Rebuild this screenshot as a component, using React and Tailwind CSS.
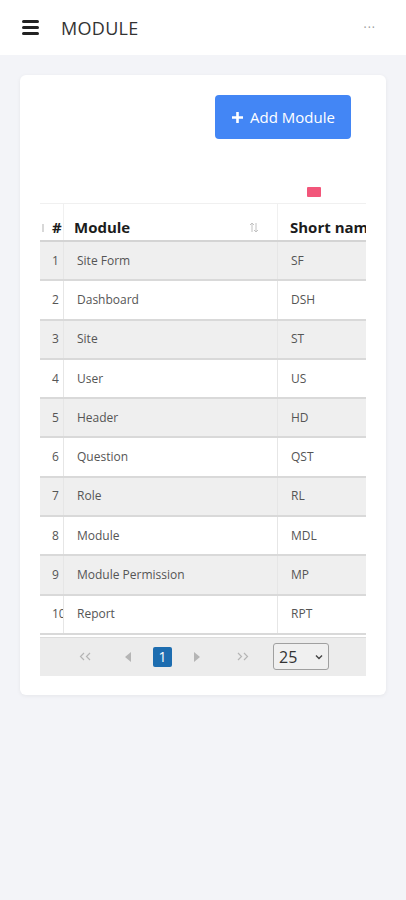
import React from 'react';

const rows = [
  { id: 1, name: 'Site Form', short: 'SF' },
  { id: 2, name: 'Dashboard', short: 'DSH' },
  { id: 3, name: 'Site', short: 'ST' },
  { id: 4, name: 'User', short: 'US' },
  { id: 5, name: 'Header', short: 'HD' },
  { id: 6, name: 'Question', short: 'QST' },
  { id: 7, name: 'Role', short: 'RL' },
  { id: 8, name: 'Module', short: 'MDL' },
  { id: 9, name: 'Module Permission', short: 'MP' },
  { id: 10, name: 'Report', short: 'RPT' },
];

const App = () => {
  return (
    <div className="min-h-screen bg-[#f3f4f8]" style={{ fontFamily: '"Open Sans", "Liberation Sans", sans-serif' }}>
      {/* Top bar */}
      <div className="h-[55px] bg-white flex items-center px-[22px]">
        <div className="flex flex-col gap-[3.5px] w-[17px]">
          <span className="block h-[2.5px] bg-[#222] rounded"></span>
          <span className="block h-[2.5px] bg-[#222] rounded"></span>
          <span className="block h-[2.5px] bg-[#222] rounded"></span>
        </div>
        <h1 className="ml-[22px] mt-[2px] text-[18px] text-[#333] tracking-[0.3px]">MODULE</h1>
        <span className="ml-auto mr-[8px] text-[#999] text-[12px] tracking-[1px] leading-none">···</span>
      </div>

      {/* Card */}
      <div className="mx-5 mt-5 bg-white rounded-md shadow-[0_1px_4px_rgba(0,0,0,0.06)] px-5 pt-5 pb-[19px]">
        <div className="flex justify-end mr-[15px]">
          <button className="h-[44px] w-[136px] bg-[#4386f5] rounded-sm text-white text-[15px] flex items-center justify-center gap-[6px]">
            <svg width="13" height="13" viewBox="0 0 13 13">
              <path d="M6.5 1v11M1 6.5h11" stroke="white" strokeWidth="2.6" />
            </svg>
            Add Module
          </button>
        </div>

        <div className="flex justify-end mt-12 mr-[45px]">
          <div className="w-[14px] h-[10px] bg-[#f2567a] rounded-[1px]"></div>
        </div>

        {/* Table */}
        <div className="mt-[6px] overflow-hidden">
          <div className="w-[420px]">
            <div className="flex h-[39px] border-t border-[#f0f0f0] border-b-2 border-b-[#d4d4d4] text-[15px] font-bold text-[#1c1c1c]">
              <div className="w-[24px] h-full flex items-center pt-[10px] border-r border-[#f0f0f0] relative">
                <span className="absolute left-[2px] top-[20px] w-[2px] h-[8px] bg-[#d8d8d8]"></span>
                <span className="ml-[12px]">#</span>
              </div>
              <div className="w-[214px] h-full flex items-center pt-[10px] justify-between pl-[10px] pr-[18px] border-r border-[#f0f0f0]">
                <span>Module</span>
                <svg width="10" height="11" viewBox="0 0 10 11">
                  <path d="M3 10V1M1 3l2-2 2 2M7 1v9M5 8l2 2 2-2" stroke="#c2c2c2" strokeWidth="1" fill="none" />
                </svg>
              </div>
              <div className="h-full flex items-center pt-[10px] pl-[12px] whitespace-nowrap">Short name</div>
            </div>

            {rows.map((r, i) => (
              <div
                key={r.id}
                className={`flex h-[39.3px] items-center border-b-2 border-[#d9d9d9] text-[12px] text-[#555] ${i % 2 === 0 ? 'bg-[#efefef]' : 'bg-white'}`}
              >
                <div className="w-[24px] h-full flex items-center overflow-hidden whitespace-nowrap border-r border-[#e6e6e6]">
                  <span className="ml-[12px]">{r.id}</span>
                </div>
                <div className="w-[214px] h-full flex items-center pl-[13px] border-r border-[#e6e6e6]">{r.name}</div>
                <div className="pl-[13px]">{r.short}</div>
              </div>
            ))}

            {/* Pagination */}
            <div className="mt-[2px] h-[39px] bg-[#ececec] border-t border-[#dcdcdc] flex items-center">
              <span className="ml-[35px] w-[20px] flex justify-center">
                <svg width="13" height="9" viewBox="0 0 13 9">
                  <path d="M5 1L1.5 4.5 5 8M11 1L7.5 4.5 11 8" stroke="#b5b5b5" strokeWidth="1.2" fill="none" />
                </svg>
              </span>
              <span className="ml-[28px] w-[10px] flex justify-center">
                <svg width="6" height="10" viewBox="0 0 6 10"><path d="M6 0v10L0 5z" fill="#b5b5b5" /></svg>
              </span>
              <span className="ml-[20px] w-[19px] h-[20px] bg-[#1d6db0] rounded-[2px] text-white text-[14px] flex items-center justify-center">1</span>
              <span className="ml-[20px] w-[10px] flex justify-center">
                <svg width="6" height="10" viewBox="0 0 6 10"><path d="M0 0v10L6 5z" fill="#b5b5b5" /></svg>
              </span>
              <span className="ml-[30px] w-[20px] flex justify-center">
                <svg width="13" height="9" viewBox="0 0 13 9">
                  <path d="M2 1l3.5 3.5L2 8M8 1l3.5 3.5L8 8" stroke="#b5b5b5" strokeWidth="1.2" fill="none" />
                </svg>
              </span>
              <div className="ml-[21px] w-[56px] h-[27px] border border-[#a0a0a0] rounded-[3px] bg-[#f0f0f0] flex items-center justify-between px-[5px]">
                <span className="text-[16px] text-[#333]">25</span>
                <svg width="8" height="6" viewBox="0 0 8 6"><path d="M1 1.5l3 3 3-3" stroke="#444" strokeWidth="1.4" fill="none" /></svg>
              </div>
            </div>
          </div>
        </div>
      </div>
    </div>
  );
};

export default App;
